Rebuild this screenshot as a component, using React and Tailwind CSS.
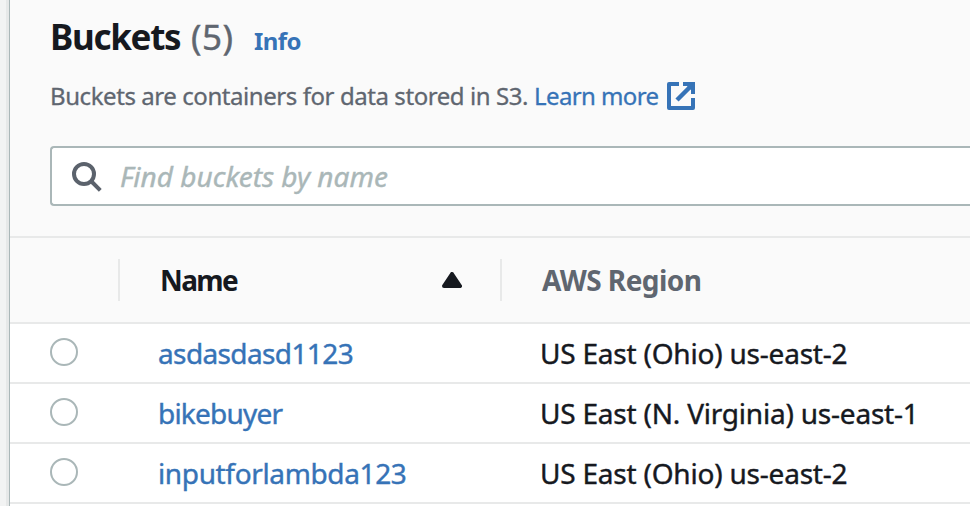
const rows = [
  { name: 'asdasdasd1123', region: 'US East (Ohio) us-east-2', nameSpacing: 'tracking-[-0.62px]' },
  { name: 'bikebuyer', region: 'US East (N. Virginia) us-east-1', nameSpacing: 'tracking-[-0.8px]' },
  { name: 'inputforlambda123', region: 'US East (Ohio) us-east-2', nameSpacing: 'tracking-[-0.36px]' },
];

function ExternalIcon() {
  return (
    <svg className="h-7 w-7 shrink-0" viewBox="0 0 28 28" fill="none" stroke="#3673b7" strokeWidth="4">
      <path d="M12 2H2v24h24V16" strokeLinejoin="round" />
      <path d="M25 3L10 18" strokeWidth="4.4" />
      <path d="M16 0h12v12h-4V8l-4-4h-4z" fill="#3673b7" stroke="none" />
    </svg>
  );
}

function SearchIcon() {
  return (
    <svg className="mt-px ml-5 h-[30px] w-[30px] shrink-0" viewBox="0 0 30 30" fill="none" stroke="#5b626c" strokeWidth="4">
      <circle cx="12" cy="12" r="10" />
      <path d="M19 19l9.3 9.3" />
    </svg>
  );
}

export default function App() {
  return (
    <div className="flex h-[506px] w-[970px] overflow-hidden bg-white font-['Noto_Sans','Open_Sans',sans-serif] whitespace-nowrap text-[#16191f]">
      <aside className="flex w-[10px] shrink-0 border-r border-[#aab7b8] bg-[#f2f3f3]">
        <div className="ml-auto w-[3px] bg-[#e6e8e8]" />
      </aside>
      <main className="flex min-w-0 grow flex-col">
        <header className="h-[236px] shrink-0 bg-[#fafafa] pl-10">
          <div className="flex h-[76px] items-baseline pt-3">
            <h1 className="w-[141px] text-[35px] leading-[50px] font-bold tracking-[-1.3px]">Buckets</h1>
            <span className="w-[63px] text-[35px] leading-[50px] tracking-[0.5px] text-[#5f6670] [-webkit-text-stroke:0.4px]">(5)</span>
            <a className="text-[24px] font-bold tracking-[-0.6px] text-[#3673b7]">Info</a>
          </div>
          <div className="flex h-10 items-center text-[24px] [-webkit-text-stroke:0.3px]">
            <p className="w-[484px] tracking-[-0.43px] text-[#5f6670]">Buckets are containers for data stored in S3.</p>
            <a className="flex items-center text-[#3673b7]">
              <span className="w-[133px] tracking-[-0.6px]">Learn more</span>
              <ExternalIcon />
            </a>
          </div>
          <div className="mt-[30px] flex h-[60px] items-center rounded-l-[4px] border-2 border-r-0 border-[#aab7b8] bg-white">
            <SearchIcon />
            <span className="ml-[18px] text-[28px] text-[#aab7b8] italic [-webkit-text-stroke:0.4px]">Find buckets by name</span>
          </div>
        </header>
        <div className="flex h-[88px] shrink-0 items-center border-y-2 border-[#e8e9e9] bg-[#fafafa] text-[28px] font-bold">
          <div className="h-[42px] w-[110px] border-r-2 border-[#e8e9e9]" />
          <div className="flex h-[42px] w-[382px] items-center border-r-2 border-[#e8e9e9] pl-10">
            <span className="tracking-[-1.6px]">Name</span>
            <svg className="mr-[38px] ml-auto h-4 w-5" viewBox="0 0 20 16" fill="#16191f">
              <path d="M10 2L18 14H2Z" stroke="#16191f" strokeWidth="4" strokeLinejoin="round" />
            </svg>
          </div>
          <span className="ml-10 tracking-[-0.55px] text-[#5f6670]">AWS Region</span>
        </div>
        {rows.map((row) => (
          <div key={row.name} className="flex h-[60px] shrink-0 items-center border-b-2 border-[#e8e9e9] text-[28px] [-webkit-text-stroke:0.4px]">
            <div className="mb-[2px] ml-10 h-7 w-7 rounded-full border-2 border-[#aab7b8]" />
            <a className={'ml-20 w-[382px] text-[#3673b7] ' + row.nameSpacing}>{row.name}</a>
            <span className="tracking-[-0.21px]">{row.region}</span>
          </div>
        ))}
      </main>
    </div>
  );
}
